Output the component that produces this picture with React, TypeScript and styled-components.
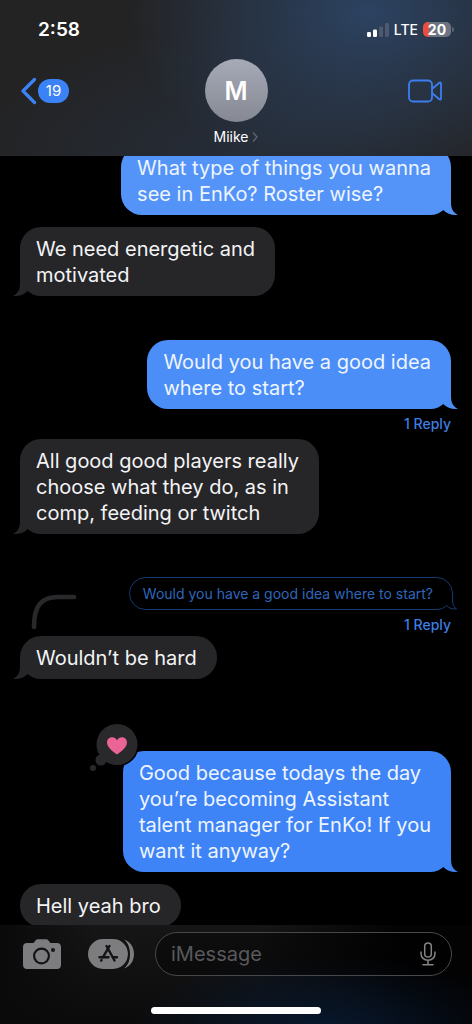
import React from "react";
import styled, { createGlobalStyle } from "styled-components";

const GlobalStyle = createGlobalStyle`
  * { box-sizing: border-box; }
  body {
    margin: 0;
    background: #000;
    color: #fff;
    font-family: Inter, "Liberation Sans", sans-serif;
  }
  button {
    margin: 0;
    padding: 0;
    border: 0;
    background: none;
    color: inherit;
    font: inherit;
    cursor: pointer;
  }
  svg { display: block; }
`;

const Screen = styled.div`
  display: flex;
  flex-direction: column;
  height: 100vh;
  overflow: hidden;
`;

const Header = styled.header`
  position: relative;
  z-index: 1;
  flex: none;
  padding-bottom: 10px;
  background:
    radial-gradient(ellipse 240px 170px at 78% 8%, rgba(48, 80, 124, 0.7), rgba(40, 60, 92, 0) 100%),
    radial-gradient(ellipse 260px 130px at 50% 100%, rgba(40, 54, 76, 0.5), rgba(40, 52, 72, 0) 100%),
    #232324;
`;

const StatusBar = styled.div`
  display: flex;
  align-items: center;
  justify-content: space-between;
  height: 59px;
  padding: 0 18px 0 38px;
`;

const Clock = styled.time`
  font-size: 19px;
  font-weight: 600;
  line-height: 24px;
`;

const StatusIcons = styled.div`
  display: flex;
  align-items: center;
  gap: 5px;
`;

const Network = styled.span`
  font-size: 14px;
  font-weight: 500;
  line-height: 20px;
`;

const Battery = styled.div`
  display: flex;
  align-items: center;
  gap: 1px;
`;

const BatteryCell = styled.span`
  width: 28px;
  height: 15px;
  border-radius: 5px;
  background: linear-gradient(90deg, #eb4e3d 20%, #6b7480 20%);
  font-size: 14px;
  font-weight: 700;
  line-height: 15px;
  text-align: center;
`;

const BatteryTip = styled.span`
  width: 2px;
  height: 5px;
  border-radius: 0 2px 2px 0;
  background: #5b6573;
`;

const NavBar = styled.nav`
  display: grid;
  grid-template-columns: 1fr auto 1fr;
  align-items: start;
  padding: 0 30px 0 21px;
`;

const BackButton = styled.button`
  display: flex;
  align-items: center;
  justify-self: start;
  gap: 1px;
  height: 64px;
`;

const UnreadBadge = styled.span`
  width: 31px;
  height: 24px;
  border-radius: 12px;
  background: #3b82f7;
  font-size: 15px;
  line-height: 24px;
  text-align: center;
`;

const ContactButton = styled.button`
  display: flex;
  flex-direction: column;
  align-items: center;
  gap: 5px;
  margin-left: 9px;
`;

const Avatar = styled.span`
  width: 63px;
  height: 63px;
  border-radius: 50%;
  background: linear-gradient(#a6aab7, #868993);
  font-size: 25px;
  font-weight: 600;
  line-height: 65px;
`;

const ContactName = styled.span`
  display: flex;
  align-items: center;
  gap: 4px;
  font-size: 14px;
  line-height: 19px;
`;

const VideoButton = styled.button`
  display: flex;
  align-items: center;
  justify-self: end;
  height: 64px;
`;

const Thread = styled.main`
  display: flex;
  flex: 1;
  flex-direction: column;
  min-height: 0;
  overflow: hidden;
  padding: 0 21px 0 20px;
`;

const MessageGroup = styled.div<{ $gap: number }>`
  display: flex;
  flex: none;
  flex-direction: column;
  margin-top: ${({ $gap }) => $gap}px;
`;

const Bubble = styled.div<{ $sent?: boolean; $color: string }>`
  position: relative;
  align-self: ${({ $sent }) => ($sent ? "flex-end" : "flex-start")};
  max-width: 80%;
  padding: 9px 20px 8px 16px;
  border-radius: 21px;
  background: ${({ $color }) => $color};
  color: ${({ $sent }) => ($sent ? "#eef5ff" : "#f4f4f6")};
  font-size: 20px;
  line-height: 26px;
  white-space: pre-line;
`;

const TailShape = styled.svg<{ $sent?: boolean }>`
  position: absolute;
  bottom: 0;
  ${({ $sent }) => ($sent ? "right: -7px;" : "left: -7px; transform: scaleX(-1);")}
`;

const ReplyCount = styled.button`
  align-self: flex-end;
  height: 30px;
  color: #3f7de0;
  font-size: 14px;
  font-weight: 500;
  line-height: 30px;
`;

const QuoteRow = styled.div`
  display: flex;
  align-items: flex-end;
  justify-content: space-between;
  padding-left: 11px;
`;

const QuoteColumn = styled.div`
  display: flex;
  flex-direction: column;
`;

const Quote = styled.button`
  position: relative;
  height: 33px;
  margin-right: -2px;
  padding: 0 19px 0 13px;
  border: 1px solid #153a74;
  border-radius: 17px;
  color: #2f66bd;
  font-size: 14px;
  line-height: 31px;
  white-space: nowrap;
`;

const QuoteTail = styled.svg`
  position: absolute;
  right: -6px;
  bottom: -1px;
`;

const ReplyArc = styled.svg`
  margin-bottom: 10px;
`;

const Reaction = styled.svg`
  position: absolute;
  top: -29px;
  left: -35px;
`;

const Footer = styled.footer`
  position: relative;
  z-index: 1;
  flex: none;
  background:
    radial-gradient(ellipse 190px 80px at 68% 110%, rgba(8, 27, 52, 0.9), rgba(6, 20, 40, 0) 100%),
    linear-gradient(90deg, rgba(0, 0, 0, 0) 55%, #030304 85%),
    linear-gradient(90deg, #0a0a0b, rgba(10, 10, 11, 0) 20%),
    linear-gradient(#161617, #0b0b0c);
`;

const Composer = styled.form`
  display: flex;
  align-items: center;
  padding: 7px 20px 0 22px;
`;

const AppsButton = styled.button`
  margin: 0 21px 0 26px;
`;

const Field = styled.div`
  display: flex;
  flex: 1;
  align-items: center;
  min-width: 0;
  height: 44px;
  padding: 0 15px;
  border: 1px solid #48484a;
  border-radius: 22px;
  background: rgba(0, 0, 0, 0.35);
`;

const MessageInput = styled.input`
  flex: 1;
  min-width: 0;
  padding: 0;
  border: 0;
  outline: 0;
  background: none;
  color: #fff;
  font: inherit;
  font-size: 20px;
  line-height: 26px;
  &::placeholder { color: #59595c; opacity: 1; }
`;

const HomeIndicator = styled.div`
  width: 36%;
  height: 7px;
  margin: 31px auto 10px;
  border-radius: 4px;
  background: #fff;
`;

function Message({ text, sent, color = "#262629", tail = true, children }: {
  text: string;
  sent?: boolean;
  color?: string;
  tail?: boolean;
  children?: React.ReactNode;
}) {
  return (
    <Bubble $sent={sent} $color={color}>
      {text}
      {tail && (
        <TailShape $sent={sent} width="24" height="20" viewBox="0 0 24 20" aria-hidden="true">
          <path d="M8 0H17V7C17 13.5 19 17.8 24 19.8C18.500 20.600 13 18.800 9.500 15.200Z" fill={color} />
        </TailShape>
      )}
      {children}
    </Bubble>
  );
}

function HeartReaction() {
  return (
    <Reaction width="52" height="50" viewBox="0 0 52 50" role="img" aria-label="Loved">
      <circle cx="29" cy="22.500" r="22" fill="#000" />
      <g fill="#29292c">
        <circle cx="29" cy="22.500" r="20.500" />
        <circle cx="13" cy="38" r="5.500" />
        <circle cx="5" cy="46" r="3" />
      </g>
      <path
        d="M29 32.500C25.500 30 19 25.500 19 20.500C19 17.300 21.300 15.200 24 15.200C26.200 15.200 28 16.400 29 18.300C30 16.400 31.800 15.200 34 15.200C36.700 15.200 39 17.300 39 20.500C39 25.500 32.500 30 29 32.500Z"
        fill="#ea6596"
      />
    </Reaction>
  );
}

export default function App() {
  return (
    <>
      <GlobalStyle />
      <Screen>
        <Header>
          <StatusBar>
            <Clock>2:58</Clock>
            <StatusIcons>
              <svg width="22" height="14" viewBox="0 0 22 14" aria-hidden="true">
                <rect x="0" y="9" width="4" height="5" rx="1.200" fill="#fff" />
                <rect x="6" y="6.500" width="4" height="7.500" rx="1.200" fill="#fff" />
                <rect x="12" y="3.500" width="4" height="10.500" rx="1.200" fill="#4d5a6e" />
                <rect x="18" y="0" width="4" height="14" rx="1.200" fill="#4d5a6e" />
              </svg>
              <Network>LTE</Network>
              <Battery>
                <BatteryCell>20</BatteryCell>
                <BatteryTip />
              </Battery>
            </StatusIcons>
          </StatusBar>
          <NavBar>
            <BackButton aria-label="Back, 19 unread">
              <svg width="16" height="28" viewBox="0 0 16 28" fill="none" stroke="#3b82f7" strokeWidth="3.200" strokeLinecap="round" strokeLinejoin="round" aria-hidden="true">
                <path d="M13.500 2.500L2 14L13.500 25.500" />
              </svg>
              <UnreadBadge>19</UnreadBadge>
            </BackButton>
            <ContactButton>
              <Avatar>M</Avatar>
              <ContactName>
                Miike
                <svg width="6" height="10" viewBox="0 0 6 10" fill="none" stroke="#66686d" strokeWidth="1.300" aria-hidden="true">
                  <path d="M1 0.500L5 5L1 9.500" />
                </svg>
              </ContactName>
            </ContactButton>
            <VideoButton aria-label="FaceTime">
              <svg width="34" height="24" viewBox="0 0 34 24" fill="none" stroke="#3b7ef0" strokeWidth="1.800" strokeLinejoin="round" aria-hidden="true">
                <rect x="1" y="1.500" width="23" height="21" rx="4" />
                <path d="M24 10L31 4C32.200 3 33 3.300 33 4.800V19.200C33 20.700 32.200 21 31 20L24 14" />
              </svg>
            </VideoButton>
          </NavBar>
        </Header>

        <Thread>
          <MessageGroup $gap={-10}>
            <Message sent color="#5494f8" text={"What type of things you wanna\nsee in EnKo? Roster wise?"} />
          </MessageGroup>
          <MessageGroup $gap={12}>
            <Message text={"We need energetic and\nmotivated"} />
          </MessageGroup>
          <MessageGroup $gap={44}>
            <Message sent color="#4b8ef8" text={"Would you have a good idea\nwhere to start?"} />
            <ReplyCount>1 Reply</ReplyCount>
            <Message text={"All good good players really\nchoose what they do, as in\ncomp, feeding or twitch"} />
          </MessageGroup>
          <MessageGroup $gap={43}>
            <QuoteRow>
              <ReplyArc width="46" height="36" viewBox="0 0 46 36" fill="none" stroke="#29292b" strokeWidth="4.600" strokeLinecap="round" aria-hidden="true">
                <path d="M3 33C3 12 10 3 27 3H43" />
              </ReplyArc>
              <QuoteColumn>
                <Quote>
                  Would you have a good idea where to start?
                  <QuoteTail width="22" height="17" viewBox="0 0 22 17" aria-hidden="true">
                    <rect width="22" height="17" fill="#000" />
                    <path
                      d="M16.500 0V7C16.500 11.500 18 14.500 20.500 15.800C16.500 16.500 12.500 15 10.500 12.500C7.500 15.500 4.500 16.500 0 16.500"
                      fill="none"
                      stroke="#153a74"
                    />
                  </QuoteTail>
                </Quote>
                <ReplyCount>1 Reply</ReplyCount>
              </QuoteColumn>
            </QuoteRow>
          </MessageGroup>
          <MessageGroup $gap={-4}>
            <Message text="Wouldn’t be hard" />
          </MessageGroup>
          <MessageGroup $gap={72}>
            <Message sent color="#3e84f7" text={"Good because todays the day\nyou’re becoming Assistant\ntalent manager for EnKo! If you\nwant it anyway?"}>
              <HeartReaction />
            </Message>
          </MessageGroup>
          <MessageGroup $gap={12}>
            <Message text="Hell yeah bro" tail={false} />
          </MessageGroup>
        </Thread>

        <Footer>
          <Composer onSubmit={(event) => event.preventDefault()}>
            <button type="button" aria-label="Camera">
              <svg width="40" height="32" viewBox="0 0 40 32" aria-hidden="true">
                <path
                  d="M5 5H10.500C11.500 5 12 4.600 12.600 3.800L13.500 2.600C14.200 1.700 15 1.200 16.200 1.200H23.800C25 1.200 25.800 1.700 26.500 2.600L27.400 3.800C28 4.600 28.500 5 29.500 5H35C37.500 5 39 6.500 39 9V27C39 29.500 37.500 31 35 31H5C2.500 31 1 29.500 1 27V9C1 6.500 2.500 5 5 5Z"
                  fill="#7d7d7f"
                />
                <circle cx="19.500" cy="18" r="7.400" fill="none" stroke="#131314" strokeWidth="2.200" />
                <circle cx="31" cy="12" r="2" fill="#131314" />
              </svg>
            </button>
            <AppsButton type="button" aria-label="Apps">
              <svg width="46" height="30" viewBox="0 0 46 30" aria-hidden="true">
                <path d="M36 0.500C42.500 2.500 46 8.500 46 15C46 21.500 42.500 27.500 36 29.500C40 26 41.800 21 41.800 15C41.800 9 40 4 36 0.500Z" fill="#7d7d7f" />
                <rect x="0" y="0" width="40" height="30" rx="15" fill="#7d7d7f" />
                <path d="M34 0.500C39 4 41 9 41 15C41 21 39 26 34 29.500" fill="none" stroke="#131314" strokeWidth="1.800" />
                <g stroke="#131314" strokeWidth="2.400" strokeLinecap="round">
                  <path d="M18.500 7L26.500 21.500" />
                  <path d="M21.500 7L15 18.200M13.500 21L13.200 21.600" />
                  <path d="M11.500 18.200H20.500M25.500 18.200H29" />
                </g>
              </svg>
            </AppsButton>
            <Field>
              <MessageInput aria-label="Message" placeholder="iMessage" />
              <button type="button" aria-label="Dictate">
                <svg width="16" height="24" viewBox="0 0 16 24" fill="none" stroke="#858587" strokeWidth="1.500" strokeLinecap="round" aria-hidden="true">
                  <rect x="4.700" y="1" width="6.600" height="14" rx="3.300" />
                  <path d="M1 10V11.500C1 15.500 4 18.300 8 18.300C12 18.300 15 15.500 15 11.500V10M8 18.500V22.500M3 22.700H13" />
                </svg>
              </button>
            </Field>
          </Composer>
          <HomeIndicator />
        </Footer>
      </Screen>
    </>
  );
}
